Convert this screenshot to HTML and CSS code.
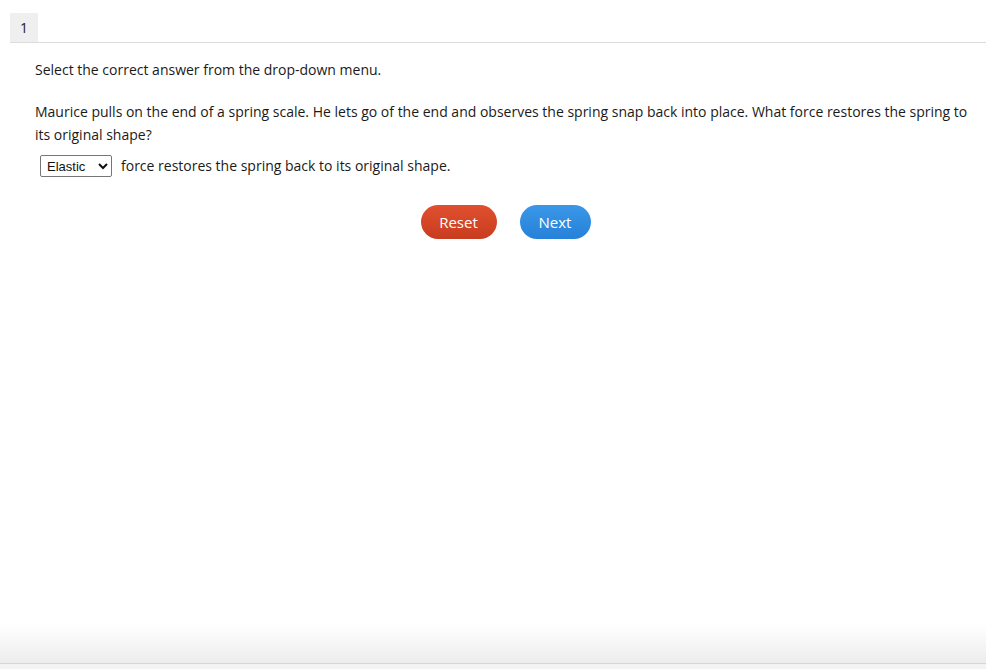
FILE: index.html
```html
<!DOCTYPE html>
<html lang="en">
<head>
    <meta charset="UTF-8" />
    <title>Question 1</title>
    <link rel="stylesheet" href="styles.css">
</head>
<body>
    <div class="tabs">
        <div class="tab active">1</div>
    </div>
    <div class="question">
        <p class="prompt">Select the correct answer from the drop-down menu.</p>
        <p class="stem">Maurice pulls on the end of a spring scale. He lets go of the end and observes the spring snap back into place. What force restores the spring to its original shape?</p>
        <div class="answer-row">
            <select class="answer-select">
                <option>Elastic</option>
                <option>Gravity</option>
                <option>Friction</option>
                <option>Magnetic</option>
            </select>
            <span>force restores the spring back to its original shape.</span>
        </div>
        <div class="buttons">
            <button class="btn btn-reset">Reset</button>
            <button class="btn btn-next">Next</button>
        </div>
    </div>
    <div class="footer-shade"></div>
</body>
</html>
```

FILE: styles.css
```css
html, body {
    height: 100%;
}
body {
    margin: 0;
    font-family: "Open Sans", Arial, sans-serif;
    color: #1a1a1a;
    background: #fff;
    position: relative;
    overflow: hidden;
}
.tabs {
    display: flex;
    margin: 13px 0 0 10px;
    border-bottom: 1px solid #dcdcdc;
}
.tab {
    width: 28px;
    height: 29px;
    line-height: 29px;
    text-align: center;
    font-size: 14px;
    color: #222;
}
.tab.active {
    background: #efefef;
}
.question {
    padding: 0 18px 0 35px;
    font-size: 14px;
}
.prompt {
    margin: 17px 0 0;
    line-height: 20px;
}
.stem {
    margin: 20px 0 0;
    line-height: 23px;
}
.answer-row {
    display: flex;
    align-items: center;
    gap: 9px;
    margin: 9px 0 0 5px;
    line-height: 20px;
}
.answer-select {
    font-family: Arial, "Liberation Sans", sans-serif;
    font-size: 13px;
    height: 22px;
    width: 72px;
    padding: 0 2px;
    border: 1px solid #767676;
    border-radius: 2px;
    background: #fff;
    color: #111;
}
.buttons {
    display: flex;
    justify-content: center;
    gap: 23px;
    margin-top: 28px;
    padding-left: 8px;
}
.btn {
    font-family: "Open Sans", Arial, sans-serif;
    font-size: 15px;
    color: #fff;
    border: none;
    border-radius: 17px;
    height: 34px;
    padding: 0 10px;
    cursor: pointer;
}
.btn-reset {
    width: 76px;
    background: linear-gradient(#e0502f, #c83c1f);
}
.btn-next {
    width: 71px;
    background: linear-gradient(#3a97e8, #2681d8);
}
.footer-shade {
    position: absolute;
    left: 0;
    right: 0;
    bottom: 0;
    height: 40px;
    background: linear-gradient(#ffffff, #ececec);
    border-bottom: 5px solid #f3f3f3;
    box-shadow: inset 0 -1px 0 #d6d6d6;
}
```
